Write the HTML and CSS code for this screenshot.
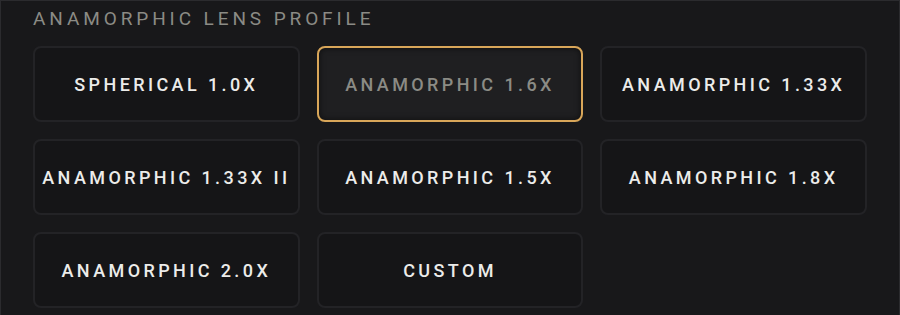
FILE: index.html
```html
<!DOCTYPE html>
<html>
<head>
    <title>Lens Profile</title>
    <link rel="stylesheet" href="styles.css">
</head>
<body>
    <div class="panel">
        <div class="panel-title">Anamorphic Lens Profile</div>
        <div class="lens-grid">
            <button class="lens">Spherical 1.0x</button>
            <button class="lens selected">Anamorphic 1.6x</button>
            <button class="lens">Anamorphic 1.33x</button>
            <button class="lens">Anamorphic 1.33x II</button>
            <button class="lens">Anamorphic 1.5x</button>
            <button class="lens">Anamorphic 1.8x</button>
            <button class="lens">Anamorphic 2.0x</button>
            <button class="lens">Custom</button>
        </div>
    </div>
</body>
</html>
```

FILE: styles.css
```css
html, body {
    height: 315px;
    overflow: hidden;
}
body {
    margin: 0;
    background-color: #18181a;
    font-family: Roboto, "Liberation Sans", sans-serif;
}
.panel {
    height: 340px;
    border: 1px solid #2b2b2e;
    background-color: #18181a;
    padding: 7px 32px 0;
}
.panel-title {
    color: #8b8b85;
    font-size: 19px;
    font-weight: 400;
    letter-spacing: 3.9px;
    text-transform: uppercase;
    line-height: 22px;
}
.lens-grid {
    display: grid;
    grid-template-columns: repeat(3, 1fr);
    gap: 17px 17px;
    margin-top: 16px;
}
.lens {
    height: 76px;
    background-color: #151517;
    border: 2px solid #232326;
    border-radius: 8px;
    color: #ececea;
    font-family: Roboto, "Liberation Sans", sans-serif;
    font-size: 18px;
    font-weight: 500;
    letter-spacing: 3.4px;
    text-transform: uppercase;
    padding: 0;
    cursor: pointer;
}
.lens.selected {
    background-color: #1f1f21;
    border-color: #d8a659;
    color: #8b8b85;
    box-shadow: inset 0 0 6px rgba(0, 0, 0, 0.6);
}
```
